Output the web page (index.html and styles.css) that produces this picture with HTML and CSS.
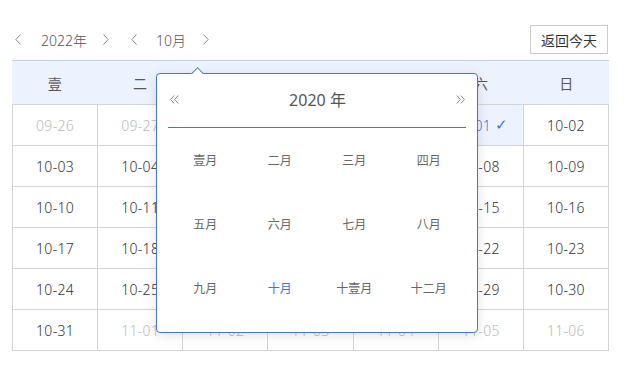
FILE: index.html
```html
<!DOCTYPE html>
<html lang="zh">
<head>
  <meta charset="UTF-8" />
  <title>日历</title>
  <link rel="stylesheet" href="styles.css">
</head>
<body>
  <div class="page">
    <div class="toolbar">
      <div class="nav">
        <span class="chev"><svg width="6" height="11" viewBox="0 0 6 11"><polyline points="5.5,0.5 0.8,5.5 5.5,10.5" /></svg></span>
        <span class="label year">2022年</span>
        <span class="chev"><svg width="6" height="11" viewBox="0 0 6 11"><polyline points="0.5,0.5 5.2,5.5 0.5,10.5" /></svg></span>
        <span class="chev gap"><svg width="6" height="11" viewBox="0 0 6 11"><polyline points="5.5,0.5 0.8,5.5 5.5,10.5" /></svg></span>
        <span class="label month">10月</span>
        <span class="chev"><svg width="6" height="11" viewBox="0 0 6 11"><polyline points="0.5,0.5 5.2,5.5 0.5,10.5" /></svg></span>
      </div>
      <button class="today">返回今天</button>
    </div>

    <div class="calendar">
      <div class="week">
        <div>壹</div><div>二</div><div>三</div><div>四</div><div>五</div><div>六</div><div>日</div>
      </div>
      <div class="days">
        <div class="day other">09-26</div>
        <div class="day other">09-27</div>
        <div class="day other">09-28</div>
        <div class="day other">09-29</div>
        <div class="day other">09-30</div>
        <div class="day selected">10-01 <span class="tick">✓</span></div>
        <div class="day">10-02</div>

        <div class="day">10-03</div>
        <div class="day">10-04</div>
        <div class="day">10-05</div>
        <div class="day">10-06</div>
        <div class="day">10-07</div>
        <div class="day">10-08</div>
        <div class="day">10-09</div>

        <div class="day">10-10</div>
        <div class="day">10-11</div>
        <div class="day">10-12</div>
        <div class="day">10-13</div>
        <div class="day">10-14</div>
        <div class="day">10-15</div>
        <div class="day">10-16</div>

        <div class="day">10-17</div>
        <div class="day">10-18</div>
        <div class="day">10-19</div>
        <div class="day">10-20</div>
        <div class="day">10-21</div>
        <div class="day">10-22</div>
        <div class="day">10-23</div>

        <div class="day">10-24</div>
        <div class="day">10-25</div>
        <div class="day">10-26</div>
        <div class="day">10-27</div>
        <div class="day">10-28</div>
        <div class="day">10-29</div>
        <div class="day">10-30</div>

        <div class="day">10-31</div>
        <div class="day other">11-01</div>
        <div class="day other">11-02</div>
        <div class="day other">11-03</div>
        <div class="day other">11-04</div>
        <div class="day other">11-05</div>
        <div class="day other">11-06</div>
      </div>
    </div>

    <!-- month picker popover -->
    <div class="picker">
      <div class="picker-head">
        <span class="dbl"><svg width="9" height="9" viewBox="0 0 9 9"><polyline points="4.2,0.5 0.7,4.5 4.2,8.5" /><polyline points="8.2,0.5 4.7,4.5 8.2,8.5" /></svg></span>
        <span class="picker-year">2020 年</span>
        <span class="dbl"><svg width="9" height="9" viewBox="0 0 9 9"><polyline points="0.8,0.5 4.3,4.5 0.8,8.5" /><polyline points="4.8,0.5 8.3,4.5 4.8,8.5" /></svg></span>
      </div>
      <div class="months">
        <div>壹月</div><div>二月</div><div>三月</div><div>四月</div>
        <div>五月</div><div>六月</div><div>七月</div><div>八月</div>
        <div>九月</div><div class="current">十月</div><div>十壹月</div><div>十二月</div>
      </div>
    </div>
  </div>
</body>
</html>
```

FILE: styles.css
```css
body {
  margin: 0;
  background-color: #fff;
  font-family: "Noto Sans", "Noto Sans CJK SC", sans-serif;
  font-weight: 300;
  color: #333;
}
.page {
  position: relative;
  padding: 25px 16px 0 12px;
}
.toolbar {
  display: flex;
  justify-content: space-between;
  align-items: center;
  height: 29px;
}
.nav {
  display: flex;
  align-items: center;
  font-size: 14px;
  color: #555;
}
.chev {
  display: flex;
  width: 12px;
  justify-content: center;
}
.chev svg polyline,
.dbl svg polyline {
  fill: none;
  stroke: #888;
  stroke-width: 1;
}
.nav .year {
  margin: 0 13px 0 17px;
}
.nav .gap {
  margin-left: 16px;
}
.nav .month {
  margin: 0 14px 0 16px;
}
.today {
  width: 78px;
  height: 29px;
  padding: 0;
  background: #fff;
  border: 1px solid #ccc;
  font-family: inherit;
  font-weight: 400;
  font-size: 14px;
  color: #333;
  margin-right: 1px;
}
.calendar {
  margin-top: 6px;
}
.week {
  display: grid;
  grid-template-columns: repeat(7, 1fr);
  height: 43px;
  border-top: 1px solid #bed3f3;
  background-color: #edf3fe;
  font-size: 14px;
  font-weight: 400;
  color: #555;
}
.week div {
  display: flex;
  align-items: center;
  justify-content: center;
}
.days {
  display: grid;
  grid-template-columns: repeat(7, 1fr);
  border-top: 1px solid #d4d4d4;
  border-left: 1px solid #d4d4d4;
}
.day {
  height: 41px;
  box-sizing: border-box;
  border-right: 1px solid #d4d4d4;
  border-bottom: 1px solid #d4d4d4;
  display: flex;
  align-items: center;
  justify-content: center;
  font-size: 14px;
  letter-spacing: 0.3px;
  color: #333;
}
.day.other {
  color: #bbb;
}
.day.selected {
  background-color: #edf3fe;
  color: #3f74d2;
}
.tick {
  margin-left: 4px;
  font-family: "DejaVu Sans", sans-serif;
  font-size: 15px;
}
.picker {
  position: absolute;
  left: 156px;
  top: 73px;
  width: 298px;
  padding: 0 11px 12px;
  background: #fff;
  border: 1px solid #4775c4;
  border-radius: 4px;
  box-shadow: 0 2px 12px rgba(0, 0, 0, 0.12);
}
.picker::before {
  content: "";
  position: absolute;
  left: 36px;
  top: -5px;
  width: 8px;
  height: 8px;
  background: #fff;
  border-left: 1px solid #4775c4;
  border-top: 1px solid #4775c4;
  transform: rotate(45deg);
}
.picker-head {
  display: flex;
  align-items: center;
  justify-content: space-between;
  height: 50px;
  padding: 0 1px 3px 2px;
  border-bottom: 1px solid #3f74d2;
}
.dbl {
  display: flex;
}
.picker-year {
  font-size: 16px;
  font-weight: 400;
  color: #555;
}
.months {
  display: grid;
  grid-template-columns: repeat(4, 1fr);
  grid-auto-rows: 64px;
  font-size: 12px;
  font-weight: 400;
  color: #666;
}
.months div {
  display: flex;
  align-items: center;
  justify-content: center;
}
.months .current {
  color: #3f74d2;
}
```
